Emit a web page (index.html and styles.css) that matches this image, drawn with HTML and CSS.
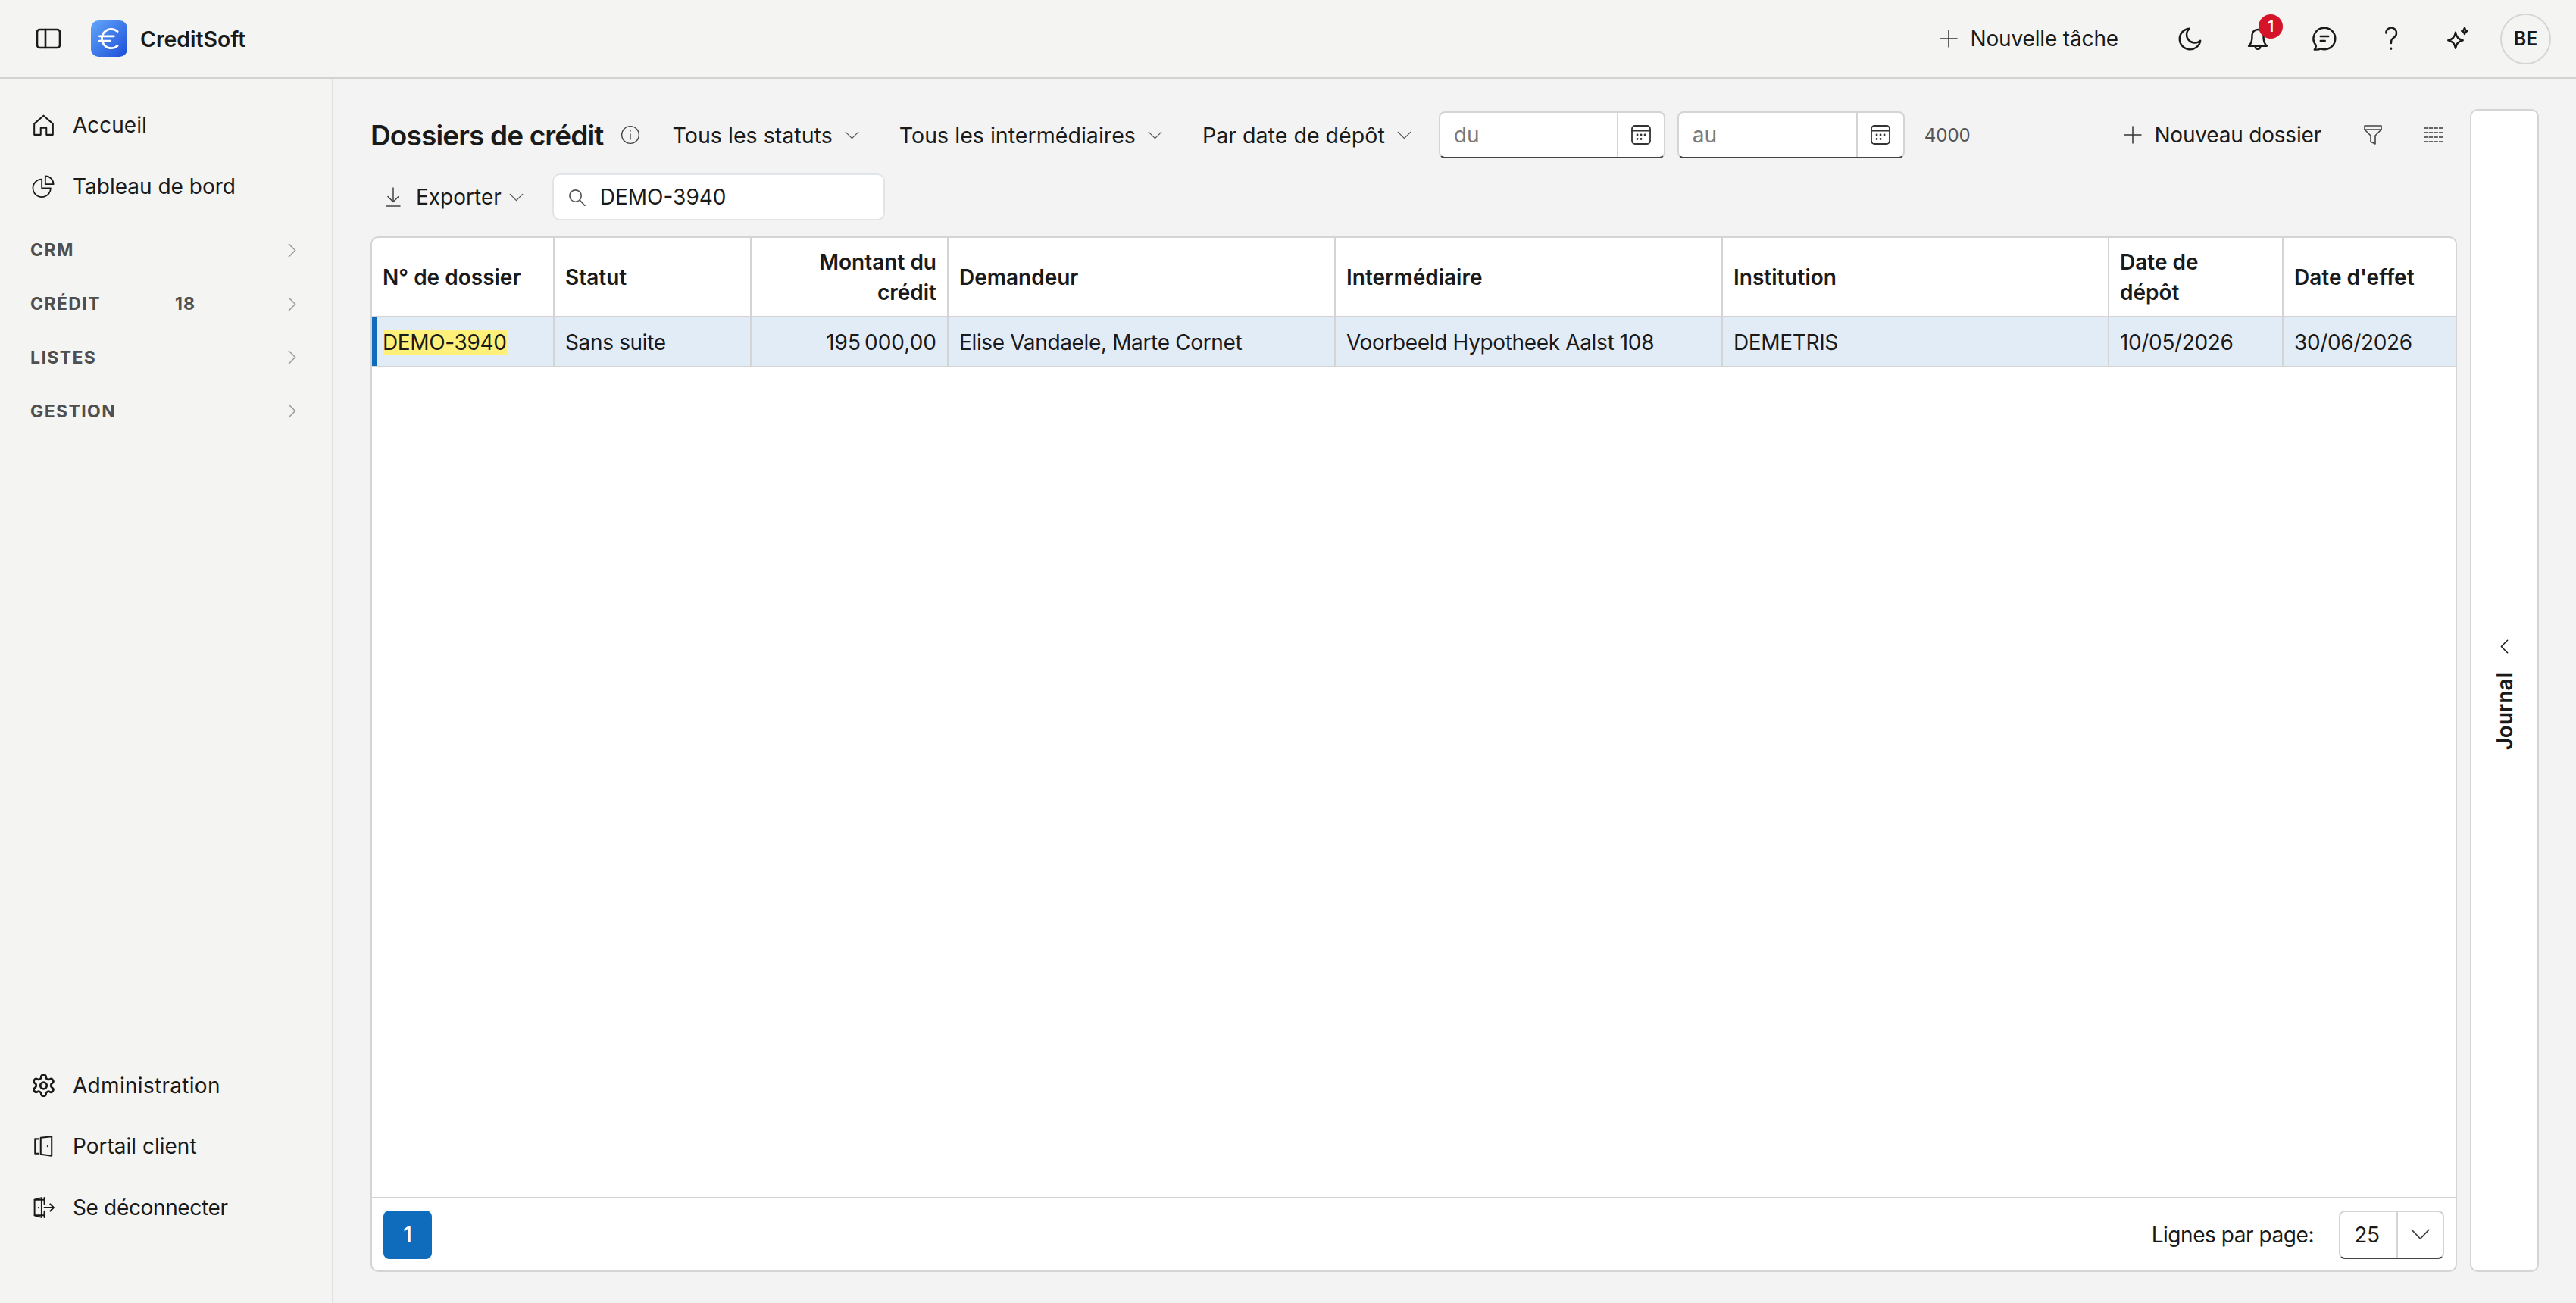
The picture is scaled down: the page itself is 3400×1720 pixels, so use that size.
FILE: index.html
```html
<!DOCTYPE html>
<html lang="fr">
<head>
<meta charset="utf-8">
<title>CreditSoft</title>
<link rel="stylesheet" href="styles.css">
</head>
<body>
<header class="topbar">
  <svg class="ic-panel" viewBox="0 0 34 28"><rect x="2" y="2" width="30" height="24" rx="3.5"/><path d="M13 2v24"/></svg>
  <div class="logo"><svg viewBox="0 0 24 24"><path d="M4 10h12M4 14h9M19 6a7.7 7.7 0 0 0-5.2-2A7.9 7.9 0 0 0 6 12c0 4.4 3.5 8 7.8 8 2 0 3.8-.8 5.2-2"/></svg></div>
  <div class="brand">CreditSoft</div>
  <div class="top-actions">
    <div class="new-task"><svg class="ic-plus" viewBox="0 0 24 24"><path d="M12 1v22M1 12h22"/></svg><span>Nouvelle tâche</span></div>
    <svg class="ic-top ic-moon" viewBox="0 0 24 24"><path d="M11 3.2a7 7 0 0 0 9.8 10.6A9.2 9.2 0 1 1 11 3.2Z"/></svg>
    <div class="bell">
      <svg class="ic-top" viewBox="0 0 24 24"><path d="M7 9a5 5 0 0 1 10 0c0 6 1 7.500 3 9.500H4c2-2 3-3.500 3-9.500Z"/><path d="M9.800 18.700c0 3.400 4.400 3.400 4.400 0"/></svg>
      <span class="badge">1</span>
    </div>
    <svg class="ic-top ic-chat" viewBox="0 0 24 24"><path d="M12 2.500a9.500 9.500 0 1 1-3.300 18.400c-1.500.8-3.600 1-5.500.8 1-1 1.500-2.400 1.300-3.700A9.500 9.500 0 0 1 12 2.500Z"/><path d="M8.500 10h7M8.500 14h4"/></svg>
    <svg class="ic-top ic-help" viewBox="0 0 24 24"><path d="M7.500 7a4.600 4.600 0 1 1 7 4c-1.600 1-2.500 1.800-2.500 4v1"/><path d="M12 20.500v.6"/></svg>
    <svg class="ic-top ic-spark" viewBox="0 0 24 24"><path d="M10 6.500c.6 4.200 2.400 6.200 6.500 7-4.100.8-5.900 2.800-6.500 7-.6-4.200-2.400-6.200-6.500-7 4.100-.8 5.900-2.800 6.500-7Z"/><path d="M18 2.500c.2 1.600 1 2.400 2.500 2.800-1.500.4-2.300 1.200-2.500 2.800-.2-1.600-1-2.400-2.500-2.800 1.500-.4 2.300-1.200 2.500-2.800Z"/></svg>
    <div class="avatar">BE</div>
  </div>
</header>

<div class="layout">
  <nav class="sidebar">
    <div class="nav-group">
      <a class="nav-item"><svg viewBox="0 0 28 28"><path d="M2.500 12.500 14 2.500l11.500 10V26H17.500V17.500h-7V26h-8Z"/></svg>Accueil</a>
      <a class="nav-item"><svg viewBox="0 0 32 32"><path d="M13.500 6a12.500 12.500 0 1 0 12.500 12.500H13.500Z"/><path d="M18.500 1.500a11.500 11.500 0 0 1 11.500 11.500h-11.500Z"/></svg>Tableau de bord</a>
    </div>
    <div class="sections">
      <div class="section"><span class="sec-label">CRM</span><svg class="sec-chev" viewBox="0 0 12 20"><path d="M1.500 1 10.500 10 1.500 19"/></svg></div>
      <div class="section"><span class="sec-label">CRÉDIT</span><span class="sec-count">18</span><svg class="sec-chev" viewBox="0 0 12 20"><path d="M1.500 1 10.500 10 1.500 19"/></svg></div>
      <div class="section"><span class="sec-label">LISTES</span><svg class="sec-chev" viewBox="0 0 12 20"><path d="M1.500 1 10.500 10 1.500 19"/></svg></div>
      <div class="section"><span class="sec-label">GESTION</span><svg class="sec-chev" viewBox="0 0 12 20"><path d="M1.500 1 10.500 10 1.500 19"/></svg></div>
    </div>
    <div class="nav-group nav-bottom">
      <a class="nav-item nav-wide"><svg viewBox="1.500 1.500 21 21"><path d="M12.200 2h-.4a2 2 0 0 0-2 2v.2a2 2 0 0 1-1 1.700l-.4.200a2 2 0 0 1-2 0l-.2-.1a2 2 0 0 0-2.700.7l-.2.400a2 2 0 0 0 .7 2.700l.2.100a2 2 0 0 1 1 1.700v.5a2 2 0 0 1-1 1.800l-.2.100a2 2 0 0 0-.7 2.700l.2.400a2 2 0 0 0 2.700.7l.2-.1a2 2 0 0 1 2 0l.4.200a2 2 0 0 1 1 1.700v.2a2 2 0 0 0 2 2h.4a2 2 0 0 0 2-2v-.2a2 2 0 0 1 1-1.700l.4-.2a2 2 0 0 1 2 0l.2.100a2 2 0 0 0 2.700-.7l.2-.4a2 2 0 0 0-.7-2.700l-.2-.1a2 2 0 0 1-1-1.800v-.5a2 2 0 0 1 1-1.700l.2-.1a2 2 0 0 0 .7-2.700l-.2-.4a2 2 0 0 0-2.700-.7l-.2.100a2 2 0 0 1-2 0l-.4-.2a2 2 0 0 1-1-1.700V4a2 2 0 0 0-2-2Z"/><circle cx="12" cy="12" r="3"/></svg>Administration</a>
      <a class="nav-item"><svg viewBox="0 0 28 28"><path d="M8 5H3.500v18H8"/><path d="M10.500 3.500 24 2v24l-13.500-2Z"/><path d="M19 14v.3"/></svg>Portail client</a>
      <a class="nav-item nav-tight"><svg viewBox="0 0 30 28"><path d="M16 4H3.500v20H16"/><path d="m3.500 4 9-2.500v25l-9-2.500"/><path d="M16 1.500v8M16 18.500v8M16 14h12M23.500 9.500 28 14l-4.500 4.500"/><path d="M8.500 14v.3"/></svg>Se déconnecter</a>
    </div>
  </nav>

  <main class="main">
    <div class="content">
      <div class="toolbar">
        <h1 class="title">Dossiers de crédit</h1>
        <svg class="ic-info" viewBox="0 0 24 24"><circle cx="12" cy="12" r="10.500"/><path d="M12 11v6.500M12 6.800v.6"/></svg>
        <div class="filter f-status">Tous les statuts<svg class="chev" viewBox="0 0 20 12"><path d="M1 1.500 10 10.500 19 1.500"/></svg></div>
        <div class="filter f-inter">Tous les intermédiaires<svg class="chev" viewBox="0 0 20 12"><path d="M1 1.500 10 10.500 19 1.500"/></svg></div>
        <div class="filter f-date">Par date de dépôt<svg class="chev" viewBox="0 0 20 12"><path d="M1 1.500 10 10.500 19 1.500"/></svg></div>
        <div class="date-input">
          <span class="date-ph">du</span>
          <span class="date-btn"><svg viewBox="0 0 28 28"><rect x="2" y="2" width="24" height="24" rx="4"/><path d="M2 8.500h24"/><path class="dots" d="M9 14h.1M14 14h.1M19 14h.1M9 19.500h.1M14 19.500h.1"/></svg></span>
        </div>
        <div class="date-input date-au">
          <span class="date-ph">au</span>
          <span class="date-btn"><svg viewBox="0 0 28 28"><rect x="2" y="2" width="24" height="24" rx="4"/><path d="M2 8.500h24"/><path class="dots" d="M9 14h.1M14 14h.1M19 14h.1M9 19.500h.1M14 19.500h.1"/></svg></span>
        </div>
        <span class="count">4000</span>
        <div class="new-file"><svg class="ic-plus" viewBox="0 0 24 24"><path d="M12 1v22M1 12h22"/></svg><span>Nouveau dossier</span></div>
        <svg class="ic-filter" viewBox="0 0 26 28"><path d="M2 2h22v5l-8 8v11l-6-3v-8L2 7Z"/><path d="M2 7h22"/></svg>
        <svg class="ic-grid" viewBox="0 0 28 24"><path d="M1 3h26M1 9h26M1 15h26M1 21h26" stroke-dasharray="5.500 1.170"/></svg>
      </div>
      <div class="toolbar2">
        <div class="export">
          <svg class="ic-dl" viewBox="0 0 20 26"><path d="M10 1v18M3 12.500 10 19.500l7-7M1 25h18"/></svg>
          <span>Exporter</span>
          <svg class="chev" viewBox="0 0 20 12"><path d="M1 1.500 10 10.500 19 1.500"/></svg>
        </div>
        <div class="search">
          <svg class="ic-search" viewBox="0 0 24 24"><circle cx="10" cy="10" r="8"/><path d="m16 16 7 7.500"/></svg>
          <span>DEMO-3940</span>
        </div>
      </div>

      <section class="card">
        <div class="table-wrap">
          <table class="grid">
            <colgroup>
              <col class="c1"><col class="c2"><col class="c3"><col class="c4"><col class="c5"><col class="c6"><col class="c7"><col class="c8">
            </colgroup>
            <thead>
              <tr>
                <th>N° de dossier</th>
                <th>Statut</th>
                <th class="num">Montant du crédit</th>
                <th>Demandeur</th>
                <th>Intermédiaire</th>
                <th>Institution</th>
                <th>Date de<br>dépôt</th>
                <th>Date d'effet</th>
              </tr>
            </thead>
            <tbody>
              <tr class="selected">
                <td class="first"><mark>DEMO-3940</mark></td>
                <td>Sans suite</td>
                <td class="num">195&#8239;000,00</td>
                <td>Elise Vandaele, Marte Cornet</td>
                <td>Voorbeeld Hypotheek Aalst 108</td>
                <td>DEMETRIS</td>
                <td>10/05/2026</td>
                <td>30/06/2026</td>
              </tr>
            </tbody>
          </table>
        </div>
        <footer class="pager">
          <button class="page-btn">1</button>
          <div class="per-page">
            <span class="per-label">Lignes par page:</span>
            <div class="select">
              <span class="sel-val">25</span>
              <span class="sel-btn"><svg viewBox="0 0 26 16"><path d="M1 1.500 13 14 25 1.500"/></svg></span>
            </div>
          </div>
        </footer>
      </section>
    </div>

    <aside class="journal">
      <div class="journal-inner">
        <svg viewBox="0 0 12 20"><path d="M10.500 1 1.500 10l9 9"/></svg>
        <span class="journal-text">Journal</span>
      </div>
    </aside>
  </main>
</div>
</body>
</html>
```

FILE: styles.css
```css
* { box-sizing: border-box; }
html, body { margin: 0; height: 100%; }
body {
  width: 3400px;
  height: 1720px;
  overflow: hidden;
  background: #f3f3f3;
  font-family: Inter, "Liberation Sans", sans-serif;
  font-size: 28px;
  color: #1a1a1a;
  display: flex;
  flex-direction: column;
}
svg { fill: none; stroke: currentColor; stroke-linecap: round; stroke-linejoin: round; flex: none; display: block; }

/* top bar */
.topbar {
  height: 104px;
  flex: none;
  display: flex;
  align-items: center;
  background: #f4f4f2;
  border-bottom: 2px solid #d2d2d2;
  padding-left: 47px;
}
.ic-panel { width: 34px; height: 28px; stroke-width: 2.600; }
.logo {
  width: 48px;
  height: 48px;
  margin-left: 39px;
  border-radius: 10px;
  background: linear-gradient(135deg, #62a6fa, #1d4ed8);
  display: flex;
  align-items: center;
  justify-content: center;
  color: #fff;
}
.logo svg { width: 38px; height: 38px; stroke-width: 1.800; }
.brand { margin-left: 17px; font-weight: 600; font-size: 28.400px; }
.top-actions { margin-left: auto; display: flex; align-items: center; padding-right: 33px; }
.new-task { display: flex; align-items: center; gap: 16px; margin-right: 77px; font-size: 28px; letter-spacing: -0.150px; }
.ic-plus { width: 24px; height: 24px; stroke-width: 1.500; color: #333; }
.ic-top { width: 36px; height: 36px; stroke-width: 1.600; }
.ic-moon { margin-right: 53px; }
.bell { position: relative; margin-right: 52px; }
.badge {
  position: absolute;
  top: -14px;
  left: 19px;
  width: 32px;
  height: 32px;
  border-radius: 50%;
  background: #d5142a;
  color: #fff;
  font-size: 20px;
  font-weight: 600;
  display: flex;
  align-items: center;
  justify-content: center;
}
.ic-chat { margin-right: 52px; }
.ic-help { margin-right: 52px; }
.ic-spark { margin-right: 38px; }
.avatar {
  width: 67px;
  height: 67px;
  border-radius: 50%;
  border: 2px solid #d6d6d6;
  display: flex;
  align-items: center;
  justify-content: center;
  font-weight: 600;
  font-size: 25px;
}

/* layout */
.layout { flex: 1; display: flex; min-height: 0; }
.sidebar {
  width: 440px;
  flex: none;
  background: #f4f4f2;
  border-right: 2px solid #dfe1e3;
  display: flex;
  flex-direction: column;
  padding: 21px 0 86px;
}
.nav-item {
  height: 80.500px;
  display: flex;
  align-items: center;
  padding-left: 42px;
  gap: 23px;
  font-size: 28px;
}
.nav-wide { letter-spacing: 0.300px; }
.nav-tight { letter-spacing: -0.350px; }
.nav-item svg { width: 31px; height: 30px; stroke-width: 1.900; }
.sections { margin-top: 9px; }
.section {
  height: 70.800px;
  display: flex;
  align-items: center;
  padding-left: 40px;
  position: relative;
  color: #4f4f4f;
  font-weight: 700;
  font-size: 23px;
  letter-spacing: 1.400px;
}
.sec-count { position: absolute; left: 231px; letter-spacing: 1px; }
.sec-chev { width: 11px; height: 19px; position: absolute; left: 380px; color: #9c9c9c; stroke-width: 1.800; }
.nav-bottom { margin-top: auto; }

/* main */
.main {
  flex: 1;
  min-width: 0;
  display: flex;
  gap: 17px;
  padding: 40px 49px 41px 49px;
}
.content { flex: 1; min-width: 0; display: flex; flex-direction: column; padding-top: 3px; }
.toolbar { height: 62px; display: flex; align-items: center; flex: none; }
.title { margin: 0; font-size: 37px; font-weight: 600; letter-spacing: -0.870px; }
.ic-info { width: 26px; height: 26px; margin-left: 22px; stroke-width: 1.300; color: #444; }
.filter { display: flex; align-items: center; gap: 16px; font-size: 28.600px; }
.f-status { margin-left: 43px; }
.f-inter { margin-left: 53px; }
.f-date { margin-left: 53px; }
.chev { width: 19px; height: 11px; stroke-width: 1.400; color: #555; }
.date-input {
  width: 299px;
  height: 62px;
  margin-left: 36px;
  background: #fff;
  border: 2px solid #d4d4d4;
  border-bottom-color: #444;
  border-radius: 8px;
  display: flex;
  align-items: stretch;
}
.date-au { width: 300px; margin-left: 16px; }
.date-ph { flex: 1; padding-left: 18px; color: #7a7a7a; display: flex; align-items: center; }
.date-btn { width: 62px; border-left: 2px solid #d4d4d4; display: flex; align-items: center; justify-content: center; }
.date-btn svg { width: 28px; height: 28px; stroke-width: 1.800; color: #333; }
.date-btn .dots { stroke-width: 2.800; }
.count { margin-left: 26px; font-size: 24px; color: #555; }
.new-file { margin-left: auto; display: flex; align-items: center; gap: 16px; letter-spacing: -0.200px; }
.ic-filter { width: 26px; height: 28px; margin-left: 55px; stroke-width: 1.600; color: #444; }
.ic-grid { width: 28px; height: 24px; margin-left: 53px; margin-right: 17px; stroke-width: 2; color: #666; }
.ic-grid path { stroke-linecap: butt; }

.toolbar2 { height: 62px; margin-top: 20px; display: flex; align-items: center; flex: none; }
.export { display: flex; align-items: center; margin-left: 20px; }
.ic-dl { width: 20px; height: 26px; stroke-width: 1.500; color: #444; }
.export span { margin-left: 20px; }
.export .chev { margin-left: 10px; }
.search {
  margin-left: 38px;
  width: 439px;
  height: 62px;
  background: #fff;
  border: 2px solid #e1e4e8;
  border-radius: 10px;
  display: flex;
  align-items: center;
  padding-left: 19px;
}
.ic-search { width: 23px; height: 23px; stroke-width: 1.700; color: #555; }
.search span { margin-left: 19px; }

/* table card */
.card {
  flex: 1;
  min-height: 0;
  margin-top: 21px;
  background: #fff;
  border: 2px solid #d4d4d4;
  border-radius: 10px;
  display: flex;
  flex-direction: column;
  overflow: hidden;
}
.table-wrap { flex: 1; min-height: 0; }
.grid { width: 100%; table-layout: fixed; border-collapse: separate; border-spacing: 0; }
.c1 { width: 241px; }
.c2, .c3 { width: 260px; }
.c4, .c5 { width: 511px; }
.c6 { width: 510px; }
.c7 { width: 230px; }
.grid th, .grid td {
  padding: 0 14px;
  text-align: left;
  border-right: 2px solid #d4d4d4;
  border-bottom: 2px solid #d4d4d4;
  font-size: 28px;
  line-height: 40px;
}
.grid th { height: 105px; font-weight: 600; }
.grid td { height: 66px; padding-top: 2px; font-weight: 400; letter-spacing: -0.350px; }
.grid th:last-child, .grid td:last-child { border-right: 0; }
.grid .num { text-align: right; }
.selected td { background: #e2ecf7; }
.selected .first { box-shadow: inset 6px 0 0 #0f6cbd; }
mark { background: #fff07a; color: inherit; }

.pager {
  height: 97px;
  flex: none;
  border-top: 2px solid #d4d4d4;
  display: flex;
  align-items: center;
  justify-content: space-between;
  padding: 0 15px 0 15px;
}
.page-btn {
  width: 64px;
  height: 64px;
  border: 0;
  border-radius: 8px;
  background: #0f6cbd;
  color: #fff;
  font: 500 28px Inter, "Liberation Sans", sans-serif;
}
.per-page { display: flex; align-items: center; gap: 33px; }
.per-label { letter-spacing: -0.450px; }
.select {
  width: 139px;
  height: 64px;
  border: 2px solid #d4d4d4;
  border-bottom-color: #444;
  border-radius: 8px;
  display: flex;
  align-items: stretch;
}
.sel-val { width: 74px; padding-right: 4px; display: flex; align-items: center; justify-content: center; letter-spacing: -0.300px; }
.sel-btn { flex: 1; border-left: 2px solid #d4d4d4; display: flex; align-items: center; justify-content: center; }
.sel-btn svg { width: 25px; height: 15px; stroke-width: 1.800; color: #444; }

/* journal */
.journal {
  width: 91px;
  flex: none;
  background: #fff;
  border: 2px solid #d4d4d4;
  border-radius: 10px;
  display: flex;
  justify-content: center;
  padding-top: 698px;
}
.journal-inner { display: flex; flex-direction: column; align-items: center; gap: 25px; }
.journal-inner svg { width: 11px; height: 19px; stroke-width: 1.600; }
.journal-text { writing-mode: vertical-rl; transform: rotate(180deg); font-weight: 600; font-size: 28px; }
```
